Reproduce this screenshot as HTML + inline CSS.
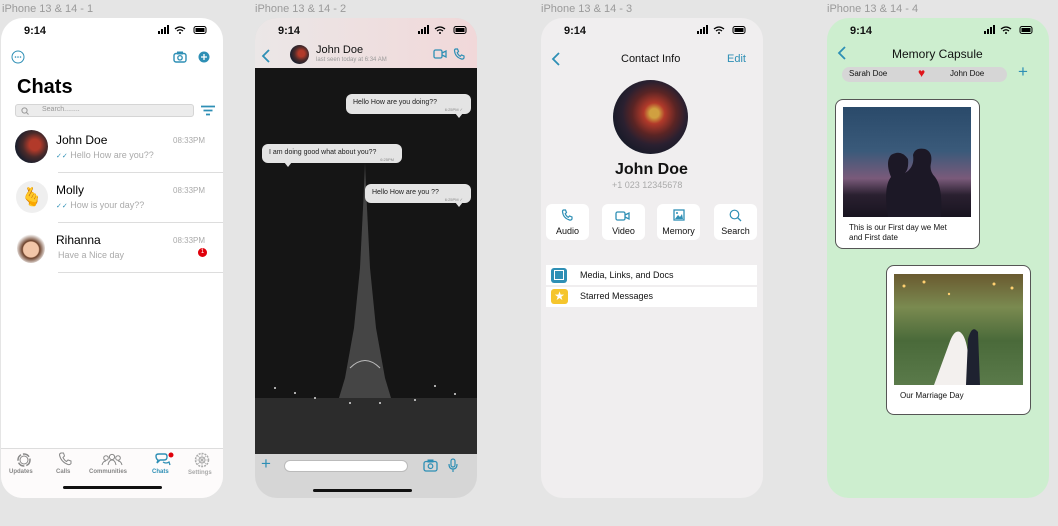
<!DOCTYPE html>
<html><head><meta charset="utf-8"><style>
*{margin:0;padding:0;box-sizing:border-box}
body{width:1058px;height:526px;background:#e5e5e5;font-family:"Liberation Sans",sans-serif;position:relative;overflow:hidden}
.a{position:absolute}
.lbl{font-size:11px;color:#9a9a9a;top:3px}
.fr{position:absolute;top:18px;width:222px;height:480px;border-radius:22px;overflow:hidden}
.t{font-size:11px;font-weight:bold;color:#111}
.blue{color:#2e8fb5}
.bub{position:absolute;background:#e4e4e4;border-radius:6px;font-size:7px;color:#222;padding:5px 7px}
.btn{position:absolute;top:186px;width:43px;height:36px;background:#fff;border-radius:6px;font-size:9px;text-align:center;padding-top:22px;color:#111}
</style></head><body>
<div class="a lbl" style="left:2px">iPhone 13 &amp; 14 - 1</div>
<div class="a lbl" style="left:255px">iPhone 13 &amp; 14 - 2</div>
<div class="a lbl" style="left:541px">iPhone 13 &amp; 14 - 3</div>
<div class="a lbl" style="left:827px">iPhone 13 &amp; 14 - 4</div>

<!-- Frame 1 -->
<div class="fr" style="left:1px;background:#fff">
 <div class="a t" style="left:23px;top:7px">9:14</div>
 <svg class="a" style="left:157px;top:7px" width="52" height="10"><rect x="0" y="6" width="2" height="3"/><rect x="3" y="4" width="2" height="5"/><rect x="6" y="2" width="2" height="7"/><rect x="9" y="0" width="2" height="9"/><path d="M17 4 Q22 0 27 4 M19 6 Q22 3.5 25 6" stroke="#000" fill="none" stroke-width="1.3"/><circle cx="22" cy="8" r="1"/><rect x="36" y="1.5" width="12" height="7" rx="2" fill="none" stroke="#000"/><rect x="37.5" y="3" width="9" height="4"/></svg>
 <svg class="a" style="left:10px;top:32px" width="14" height="14"><circle cx="7" cy="7" r="6" fill="none" stroke="#2e8fb5"/><circle cx="4.5" cy="7" r=".8" fill="#2e8fb5"/><circle cx="7" cy="7" r=".8" fill="#2e8fb5"/><circle cx="9.5" cy="7" r=".8" fill="#2e8fb5"/></svg>
 <svg class="a" style="left:172px;top:33px" width="14" height="12"><rect x="1" y="2.5" width="12" height="8.5" rx="2" fill="none" stroke="#2e8fb5" stroke-width="1.4"/><rect x="4" y="0.5" width="6" height="3" fill="#2e8fb5"/><circle cx="7" cy="6.8" r="2.2" fill="none" stroke="#2e8fb5" stroke-width="1.3"/></svg>
 <svg class="a" style="left:197px;top:33px" width="12" height="12"><circle cx="6" cy="6" r="5.5" fill="#2e8fb5"/><path d="M6 3V9M3 6H9" stroke="#fff" stroke-width="1.3"/></svg>
 <div class="a" style="left:16px;top:58px;font-size:20px;font-weight:bold;color:#000">Chats</div>
 <div class="a" style="left:14px;top:86px;width:179px;height:13px;background:#ececec;border:1px solid #d5d5d5;border-radius:3px;font-size:7px;color:#999;padding:1px 0 0 26px">Search........</div>
 <svg class="a" style="left:20px;top:89px" width="8" height="8"><circle cx="3.5" cy="3.5" r="2.6" fill="none" stroke="#999"/><path d="M5.5 5.5L7.5 7.5" stroke="#999"/></svg>
 <svg class="a" style="left:199px;top:87px" width="16" height="12"><path d="M1 1.5H15M3.5 5.5H12.5M6 9.5H10" stroke="#2e8fb5" stroke-width="1.8"/></svg>
 <div class="a" style="left:14px;top:112px;width:33px;height:33px;border-radius:50%;background:radial-gradient(circle at 60% 45%,#b23a2a 0 20%,#4a2a2a 45%,#1c1f2c 70%)"></div>
 <div class="a" style="left:55px;top:115px;font-size:12px;color:#000">John Doe</div>
 <div class="a" style="left:172px;top:118px;font-size:8px;color:#aaa">08:33PM</div>
 <div class="a" style="left:55px;top:132px;font-size:9px;color:#aaa"><span class="blue" style="font-size:7px">✓✓</span> Hello How are you??</div>
 <div class="a" style="left:57px;top:154px;width:166px;height:1px;background:#ddd"></div>
 <div class="a" style="left:15px;top:163px;width:32px;height:32px;border-radius:50%;background:#efefef;text-align:center;font-size:18px;line-height:32px">🫰</div>
 <div class="a" style="left:55px;top:165px;font-size:12px;color:#000">Molly</div>
 <div class="a" style="left:172px;top:168px;font-size:8px;color:#aaa">08:33PM</div>
 <div class="a" style="left:55px;top:182px;font-size:9px;color:#aaa"><span class="blue" style="font-size:7px">✓✓</span> How is your day??</div>
 <div class="a" style="left:57px;top:204px;width:166px;height:1px;background:#ddd"></div>
 <div class="a" style="left:16px;top:215px;width:28px;height:30px;border-radius:50%;background:radial-gradient(circle at 50% 55%,#f2c6a8 0 35%,#6b3f28 40%,#fff 70%)"></div>
 <div class="a" style="left:55px;top:215px;font-size:12px;color:#000">Rihanna</div>
 <div class="a" style="left:172px;top:218px;font-size:8px;color:#aaa">08:33PM</div>
 <div class="a" style="left:57px;top:232px;font-size:9px;color:#aaa">Have a Nice day</div>
 <div class="a" style="left:197px;top:230px;width:9px;height:9px;border-radius:50%;background:#e0000b;color:#fff;font-size:6px;text-align:center;line-height:9px">1</div>
 <div class="a" style="left:57px;top:254px;width:166px;height:1px;background:#ddd"></div>
 <div class="a" style="left:0;top:430px;width:222px;height:50px;background:#fdfbfb;border-top:1px solid #ddd"></div>
 <svg class="a" style="left:15px;top:434px" width="16" height="16"><circle cx="8" cy="8" r="6" fill="none" stroke="#888" stroke-width="1.5" stroke-dasharray="7 2"/><circle cx="8" cy="8" r="4" fill="none" stroke="#888"/></svg>
 <svg class="a" style="left:57px;top:434px" width="14" height="14"><path d="M3 1L5.5 1 6.5 4 5 5.5Q6.5 8.5 8.5 9.5L10 8 13 9 13 11.5Q12 13 10 12.5Q3 10 1.5 3Q1.5 1.5 3 1Z" fill="none" stroke="#888"/></svg>
 <svg class="a" style="left:100px;top:435px" width="22" height="13"><circle cx="5" cy="5" r="2.3" fill="none" stroke="#888"/><circle cx="11" cy="4" r="2.6" fill="none" stroke="#888"/><circle cx="17" cy="5" r="2.3" fill="none" stroke="#888"/><path d="M1 12Q2 8 5 8M7 12Q8 7 11 7Q14 7 15 12M21 12Q20 8 17 8" fill="none" stroke="#888"/></svg>
 <svg class="a" style="left:153px;top:434px" width="20" height="16"><path d="M2 4Q2 2 5 2H11Q13 2 13 5Q13 8 10 8H6L3 11 4 8Q2 7 2 4Z" fill="none" stroke="#2e8fb5" stroke-width="1.4"/><path d="M9 10Q12 12 15 10L16 13" fill="none" stroke="#2e8fb5" stroke-width="1.3"/><circle cx="17" cy="3" r="2.5" fill="#e0000b"/></svg>
 <svg class="a" style="left:193px;top:434px" width="16" height="16"><circle cx="8" cy="8" r="6.5" fill="none" stroke="#aaa" stroke-width="1.5" stroke-dasharray="2 1"/><circle cx="8" cy="8" r="3" fill="none" stroke="#aaa"/><path d="M8 2V14M2 8H14M4 4L12 12M12 4L4 12" stroke="#aaa" stroke-width=".6"/></svg>
 <div class="a" style="left:8px;top:451px;font-size:6px;color:#888;font-weight:bold">Updates</div>
 <div class="a" style="left:55px;top:451px;font-size:6px;color:#888;font-weight:bold">Calls</div>
 <div class="a" style="left:88px;top:451px;font-size:6px;color:#888;font-weight:bold">Communities</div>
 <div class="a" style="left:151px;top:451px;font-size:6px;color:#2e8fb5;font-weight:bold">Chats</div>
 <div class="a" style="left:187px;top:452px;font-size:6px;color:#aaa;font-weight:bold">Settings</div>
 <div class="a" style="left:62px;top:468px;width:99px;height:3px;background:#111;border-radius:2px"></div>
</div>

<!-- Frame 2 -->
<div class="fr" style="left:255px;background:#d6d6d6">
 <div class="a" style="left:0;top:0;width:222px;height:50px;background:linear-gradient(90deg,#ebe7e7,#f1d8d9)"></div>
 <div class="a t" style="left:23px;top:7px">9:14</div>
 <svg class="a" style="left:163px;top:7px" width="52" height="10"><rect x="0" y="6" width="2" height="3"/><rect x="3" y="4" width="2" height="5"/><rect x="6" y="2" width="2" height="7"/><rect x="9" y="0" width="2" height="9"/><path d="M17 4 Q22 0 27 4 M19 6 Q22 3.5 25 6" stroke="#000" fill="none" stroke-width="1.3"/><circle cx="22" cy="8" r="1"/><rect x="36" y="1.5" width="12" height="7" rx="2" fill="none" stroke="#000"/><rect x="37.5" y="3" width="9" height="4"/></svg>
 <svg class="a" style="left:6px;top:31px" width="10" height="14"><path d="M8 1L2 7 8 13" stroke="#2e8fb5" stroke-width="1.8" fill="none"/></svg>
 <div class="a" style="left:35px;top:27px;width:19px;height:19px;border-radius:50%;background:radial-gradient(circle at 60% 45%,#b23a2a 0 20%,#4a2a2a 45%,#1c1f2c 70%)"></div>
 <div class="a" style="left:61px;top:26px;font-size:11px;color:#111">John Doe</div>
 <div class="a" style="left:61px;top:39px;font-size:6px;color:#999">last seen today at 6:34 AM</div>
 <svg class="a" style="left:178px;top:31px" width="14" height="10"><rect x="1" y="1" width="8" height="8" rx="1.5" fill="none" stroke="#2e8fb5" stroke-width="1.3"/><path d="M9 4L13 2V8L9 6" fill="none" stroke="#2e8fb5" stroke-width="1.3"/></svg>
 <svg class="a" style="left:198px;top:30px" width="12" height="12"><path d="M2.5 1L4.5 1 5.5 3.5 4.2 4.8Q5.5 7.5 7.3 8.3L8.5 7 11 8 11 10Q10 11.5 8.5 11Q2 9 1.5 2.5Q1.5 1.3 2.5 1Z" fill="none" stroke="#2e8fb5" stroke-width="1.2"/></svg>
 <div class="a" style="left:0;top:50px;width:222px;height:386px;background:#141414;overflow:hidden">
  <svg width="222" height="386"><rect width="222" height="386" fill="#151515"/>
  <path d="M110 95L108.5 130 105 200 99 260 90 310 84 330H136L130 310 121 260 115 200 111.5 130Z" fill="#555" opacity=".75"/>
  <path d="M95 300Q110 285 125 300" stroke="#bbb" fill="none"/>
  <rect x="0" y="330" width="222" height="56" fill="#2c2c2c"/>
  <g fill="#ddd"><circle cx="20" cy="320" r="1"/><circle cx="40" cy="325" r="1"/><circle cx="180" cy="318" r="1"/><circle cx="200" cy="326" r="1"/><circle cx="60" cy="330" r="1"/><circle cx="160" cy="332" r="1"/><circle cx="95" cy="335" r="1"/><circle cx="125" cy="335" r="1"/></g></svg>
 </div>
 <div class="bub" style="left:91px;top:76px;width:125px;height:20px">Hello How are you doing??<div class="a" style="right:8px;top:13px;font-size:4px;color:#888">6:25PM ✓</div></div>
 <div class="a" style="left:200px;top:95px;width:0;height:0;border-left:4px solid transparent;border-right:4px solid transparent;border-top:5px solid #e4e4e4"></div>
 <div class="bub" style="left:7px;top:126px;width:140px;height:19px">I am doing good what about you??<div class="a" style="right:8px;top:13px;font-size:4px;color:#888">6:25PM</div></div>
 <div class="a" style="left:29px;top:144px;width:0;height:0;border-left:4px solid transparent;border-right:4px solid transparent;border-top:5px solid #e4e4e4"></div>
 <div class="bub" style="left:110px;top:166px;width:106px;height:19px">Hello How are you ??<div class="a" style="right:8px;top:13px;font-size:4px;color:#888">6:25PM ✓</div></div>
 <div class="a" style="left:200px;top:184px;width:0;height:0;border-left:4px solid transparent;border-right:4px solid transparent;border-top:5px solid #e4e4e4"></div>
 <div class="a blue" style="left:6px;top:436px;font-size:17px">+</div>
 <div class="a" style="left:29px;top:442px;width:124px;height:12px;background:#fff;border-radius:6px;border:1px solid #bbb"></div>
 <svg class="a" style="left:168px;top:441px" width="15" height="13"><rect x="1" y="2.5" width="13" height="9.5" rx="2" fill="none" stroke="#2e8fb5" stroke-width="1.3"/><rect x="4.5" y="0.5" width="6" height="3" fill="#2e8fb5"/><circle cx="7.5" cy="7.2" r="2.3" fill="none" stroke="#2e8fb5" stroke-width="1.2"/></svg>
 <svg class="a" style="left:193px;top:440px" width="10" height="15"><rect x="3" y="1" width="4" height="8" rx="2" fill="none" stroke="#2e8fb5" stroke-width="1.2"/><path d="M1 6Q1 11 5 11Q9 11 9 6M5 11V14" fill="none" stroke="#2e8fb5" stroke-width="1.2"/></svg>
 <div class="a" style="left:58px;top:471px;width:99px;height:3px;background:#111;border-radius:2px"></div>
</div>

<!-- Frame 3 -->
<div class="fr" style="left:541px;background:#f0eeef">
 <div class="a t" style="left:23px;top:7px">9:14</div>
 <svg class="a" style="left:156px;top:7px" width="52" height="10"><rect x="0" y="6" width="2" height="3"/><rect x="3" y="4" width="2" height="5"/><rect x="6" y="2" width="2" height="7"/><rect x="9" y="0" width="2" height="9"/><path d="M17 4 Q22 0 27 4 M19 6 Q22 3.5 25 6" stroke="#000" fill="none" stroke-width="1.3"/><circle cx="22" cy="8" r="1"/><rect x="36" y="1.5" width="12" height="7" rx="2" fill="none" stroke="#000"/><rect x="37.5" y="3" width="9" height="4"/></svg>
 <svg class="a" style="left:10px;top:34px" width="10" height="14"><path d="M8 1L2 7 8 13" stroke="#2e8fb5" stroke-width="1.8" fill="none"/></svg>
 <div class="a" style="left:80px;top:35px;font-size:11px;color:#111">Contact Info</div>
 <div class="a blue" style="left:186px;top:35px;font-size:11px">Edit</div>
 <div class="a" style="left:72px;top:62px;width:75px;height:74px;border-radius:50%;background:radial-gradient(circle at 55% 45%,#d0a040 0 8%,#b23a2a 18%,#5a2424 38%,#2a2030 55%,#161a28 75%)"></div>
 <div class="a" style="left:74px;top:143px;font-size:16px;font-weight:bold;color:#111">John Doe</div>
 <div class="a" style="left:71px;top:162px;font-size:9px;color:#aaa">+1 023 12345678</div>
 <div class="btn" style="left:5px">Audio</div>
 <div class="btn" style="left:61px">Video</div>
 <div class="btn" style="left:116px">Memory</div>
 <div class="btn" style="left:173px">Search</div>
 <svg class="a" style="left:20px;top:191px" width="12" height="12"><path d="M2.5 1L4.5 1 5.5 3.5 4.2 4.8Q5.5 7.5 7.3 8.3L8.5 7 11 8 11 10Q10 11.5 8.5 11Q2 9 1.5 2.5Q1.5 1.3 2.5 1Z" fill="none" stroke="#2e8fb5" stroke-width="1.2"/></svg>
 <svg class="a" style="left:74px;top:193px" width="15" height="10"><rect x="1" y="1" width="9" height="8" rx="1.5" fill="none" stroke="#2e8fb5" stroke-width="1.3"/><path d="M10 4L14 2V8L10 6" fill="none" stroke="#2e8fb5" stroke-width="1.3"/></svg>
 <svg class="a" style="left:132px;top:191px" width="12" height="12"><rect x="1" y="1" width="10" height="10" fill="none" stroke="#2e8fb5" stroke-width="1.3"/><path d="M2 10L5 6 7 8 9 5 10 10Z" fill="#2e8fb5"/><circle cx="4" cy="4" r="1" fill="#2e8fb5"/></svg>
 <svg class="a" style="left:188px;top:191px" width="13" height="13"><circle cx="5.5" cy="5.5" r="4.3" fill="none" stroke="#2e8fb5" stroke-width="1.2"/><path d="M8.5 8.5L12 12" stroke="#2e8fb5" stroke-width="1.3"/></svg>
 <div class="a" style="left:5px;top:247px;width:211px;height:20px;background:#fff"></div>
 <div class="a" style="left:5px;top:269px;width:211px;height:20px;background:#fff"></div>
 <div class="a" style="left:10px;top:250px;width:16px;height:15px;background:#2e8fb5;border-radius:3px"></div>
 <div class="a" style="left:13px;top:252px;width:10px;height:10px;border:1px solid #fff"></div>
 <div class="a" style="left:10px;top:271px;width:17px;height:15px;background:#f5c52c;border-radius:3px;color:#fff;font-size:12px;text-align:center;line-height:15px">★</div>
 <div class="a" style="left:39px;top:252px;font-size:9px;color:#111">Media, Links, and Docs</div>
 <div class="a" style="left:39px;top:273px;font-size:9px;color:#111">Starred Messages</div>
</div>

<!-- Frame 4 -->
<div class="fr" style="left:827px;background:#cdeecf">
 <div class="a t" style="left:23px;top:7px">9:14</div>
 <svg class="a" style="left:157px;top:7px" width="52" height="10"><rect x="0" y="6" width="2" height="3"/><rect x="3" y="4" width="2" height="5"/><rect x="6" y="2" width="2" height="7"/><rect x="9" y="0" width="2" height="9"/><path d="M17 4 Q22 0 27 4 M19 6 Q22 3.5 25 6" stroke="#000" fill="none" stroke-width="1.3"/><circle cx="22" cy="8" r="1"/><rect x="36" y="1.5" width="12" height="7" rx="2" fill="none" stroke="#000"/><rect x="37.5" y="3" width="9" height="4"/></svg>
 <svg class="a" style="left:10px;top:28px" width="10" height="14"><path d="M8 1L2 7 8 13" stroke="#2e8fb5" stroke-width="1.8" fill="none"/></svg>
 <div class="a" style="left:65px;top:29px;font-size:12px;color:#111">Memory Capsule</div>
 <div class="a" style="left:15px;top:49px;width:165px;height:15px;background:#d6d6d6;border-radius:8px"></div>
 <div class="a" style="left:22px;top:51px;font-size:8px;color:#111">Sarah Doe</div>
 <div class="a" style="left:91px;top:48px;font-size:12px;color:#e0141b">♥</div>
 <div class="a" style="left:123px;top:51px;font-size:8px;color:#111">John Doe</div>
 <div class="a blue" style="left:191px;top:44px;font-size:17px">+</div>
 <div class="a" style="left:8px;top:81px;width:145px;height:150px;background:#fff;border:1px solid #555;border-radius:8px"></div>
 <div class="a" style="left:16px;top:89px;width:128px;height:110px;background:linear-gradient(180deg,#2a4a6a 0%,#3a5a7a 40%,#7a5a7a 65%,#2a2030 80%,#181420 100%)"></div>
 <svg class="a" style="left:16px;top:89px" width="128" height="110"><path d="M45 110Q40 80 48 70Q42 55 48 48Q58 42 65 52Q66 62 62 66Q72 60 70 48Q72 40 82 42Q90 45 88 56Q86 64 92 70Q100 80 98 110Z" fill="#1c1826"/></svg>
 <div class="a" style="left:22px;top:205px;font-size:8px;color:#111;line-height:10px">This is our First day we Met<br>and First date</div>
 <div class="a" style="left:59px;top:247px;width:145px;height:150px;background:#fff;border:1px solid #555;border-radius:8px"></div>
 <div class="a" style="left:67px;top:256px;width:129px;height:111px;background:linear-gradient(180deg,#6a5a30 0%,#7a8a50 30%,#4a6a3a 60%,#5a7a4a 100%)"></div>
 <svg class="a" style="left:67px;top:256px" width="129" height="111"><path d="M40 111L55 70Q60 55 66 58Q72 62 74 80L80 111Z" fill="#f3f0ee"/><path d="M72 111L74 65Q78 50 84 58L86 111Z" fill="#1e2230"/><g fill="#ffd070"><circle cx="10" cy="12" r="1.5"/><circle cx="30" cy="8" r="1.5"/><circle cx="100" cy="10" r="1.5"/><circle cx="118" cy="14" r="1.5"/><circle cx="55" cy="20" r="1.2"/></g></svg>
 <div class="a" style="left:73px;top:373px;font-size:8px;color:#111">Our Marriage Day</div>
</div>
</body></html>
